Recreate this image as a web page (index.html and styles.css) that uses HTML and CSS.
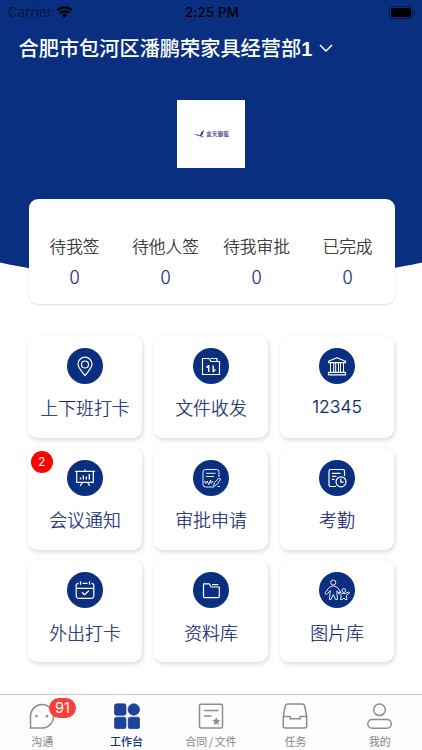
FILE: index.html
```
<!DOCTYPE html>
<html lang="zh-CN">

<head>
    <meta charset="UTF-8">
    <meta name="viewport" content="width=device-width, initial-scale=1.0">
    <title>工作台</title>
    <link rel="stylesheet" href="styles.css">
</head>

<body>
    <div class="wrapper">
        <div class="header">
            <div class="status">
                <div class="carrier">
                    <span>Carrier</span>
                    <svg class="wifi" viewBox="0 0 17 12">
                        <path d="M8.5 12L5.9 9.2a3.7 3.7 0 0 1 5.2 0z" fill="#000" />
                        <path d="M3.9 7.2a6.5 6.5 0 0 1 9.2 0M1.2 4.4a10.4 10.4 0 0 1 14.6 0" fill="none" stroke="#000" stroke-width="2.3" />
                    </svg>
                </div>
                <div class="time">2:25 PM</div>
                <svg class="battery" viewBox="0 0 27 13">
                    <rect x=".5" y=".5" width="23" height="12" rx="3.3" fill="none" stroke="#000" stroke-opacity=".4" />
                    <rect x="2" y="2" width="20" height="9" rx="1.8" fill="#000" />
                    <path d="M25 4.5v4q1.5-.6 1.5-2t-1.5-2z" fill="#000" fill-opacity=".4" />
                </svg>
            </div>
            <div class="company">
                <span>合肥市包河区潘鹏荣家具经营部<b>1</b></span>
                <svg class="arrow" viewBox="0 0 14 8"><path d="M1 1l6 6 6-6" /></svg>
            </div>
            <div class="logo">
                <svg class="logo-mark" viewBox="0 0 12 9">
                    <path d="M0 5l4.500.6L7 6.400l1.300-3L11 .5 10 4.500 8 7.500 5 6.800 3.500 5.900z" />
                    <path d="M8 8.200l2.500-1" stroke="#1c2f7c" stroke-width=".7" />
                </svg>
                <span>言天御玺</span>
            </div>
        </div>

        <div class="stats">
            <div class="stat"><div class="name">待我签</div><div class="num">0</div></div>
            <div class="stat"><div class="name">待他人签</div><div class="num">0</div></div>
            <div class="stat"><div class="name">待我审批</div><div class="num">0</div></div>
            <div class="stat"><div class="name">已完成</div><div class="num">0</div></div>
        </div>

        <ul class="menu">
            <li>
                <svg class="icon" viewBox="0 0 36 36">
                    <path d="M18 27.500c-4.500-5.300-7-8.200-7-11.300a7 7 0 0 1 14 0c0 3.100-2.500 6-7 11.300z" />
                    <circle cx="18" cy="16.500" r="3.500" />
                </svg>
                <div class="des">上下班打卡</div>
            </li>
            <li>
                <svg class="icon" viewBox="0 0 36 36">
                    <path d="M9.500 26.500v-16h6.500l2 3h8.500v13z" />
                    <path d="M17.500 10.500h6.500v3" />
                    <path d="M13.500 19.500l2.200-2v6.500M20.200 17.500v6.300l2.200-2.300" stroke-width="1.500" />
                </svg>
                <div class="des">文件收发</div>
            </li>
            <li>
                <svg class="icon" viewBox="0 0 36 36">
                    <path d="M9.500 14.700v-1.500L18 9.700l8.500 3.500v1.500zM9.500 26.800v-2.500h17v2.500z" />
                    <path d="M11.500 15v9M14.700 15v9M16.700 15v9M19.500 15v9M21.500 15v9M24.500 15v9" stroke-width="1" />
                </svg>
                <div class="des latin">12345</div>
            </li>
            <li>
                <span class="badge">2</span>
                <svg class="icon" viewBox="0 0 36 36">
                    <path d="M8 11.300h20M9.700 11.500v10.800h16.600V11.500M9.700 22.300h16.600M18 9.500v1.500M15.500 22.500l-2.300 3.300M20.500 22.500l2.300 3.300" />
                    <path d="M13.500 19.500v-2M16.300 19.500v-4M19.300 19.500v-3M22.300 19.500V14" stroke-width="1.400" />
                </svg>
                <div class="des">会议通知</div>
            </li>
            <li>
                <svg class="icon thin" viewBox="0 0 36 36">
                    <path d="M26 17v-5a2.500 2.500 0 0 0-2.500-2.500h-11A2.500 2.500 0 0 0 10 12v12.500a2.500 2.500 0 0 0 2.500 2.500H21M13 13.300h9.500M13 16.500h8" />
                    <path d="M11.500 21l1.200 2.500 1.600-2.500 1.300 3.500 2-4.500.5 3.500 2-2.500M20.500 26l1-3.500 4.500-4.300 1.700.8-3.200 5-3 2zM24.500 26.500h2.500" />
                </svg>
                <div class="des">审批申请</div>
            </li>
            <li>
                <svg class="icon" viewBox="0 0 36 36">
                    <path d="M25.500 16v-5a1.500 1.500 0 0 0-1.500-1.500H11.500A1.500 1.500 0 0 0 10 11v14a1.500 1.500 0 0 0 1.500 1.500H17M13 13.300h8.500M13 16.300h4.500M13 19.300h2.500" />
                    <circle cx="22" cy="21.800" r="5" />
                    <path d="M21.800 18.800v3.400h2.800" />
                </svg>
                <div class="des">考勤</div>
            </li>
            <li>
                <svg class="icon" viewBox="0 0 36 36">
                    <path d="M11.500 11.300a2.300 2.300 0 0 0-2.300 2.300V24a2.300 2.300 0 0 0 2.300 2.300h13A2.300 2.300 0 0 0 26.800 24V13.600a2.300 2.300 0 0 0-2.300-2.300M15.500 11.300h5M9.200 16.300h17.600M13.500 9.300v3.500M22.500 9.300v3.500" />
                    <path d="M15 20.300l2.500 2.400 4.300-3.900" />
                </svg>
                <div class="des">外出打卡</div>
            </li>
            <li>
                <svg class="icon" viewBox="0 0 36 36">
                    <path d="M10.500 11.800h5.800l1.800 3.200h8.200v9.500a1.200 1.200 0 0 1-1.200 1.200H12a1.500 1.500 0 0 1-1.500-1.500zM19 12.600h6.300" />
                </svg>
                <div class="des">资料库</div>
            </li>
            <li>
                <svg class="icon thin" viewBox="0 0 36 36">
                    <circle cx="14.300" cy="10.500" r="2.500" />
                    <path d="M10.500 27.500l.7-9-2.700 3.200c-1.500 1.200-3 .2-2.200-1l3.200-4.500q2-2.200 4.800-2.200t4.800 2.200l2.300 4-1.300 1-2.300-2.200.7 8.500h-2l-2.200-5-2.300 5z" />
                    <circle cx="24.800" cy="18.500" r="1.900" />
                    <path d="M20.500 20.300l2.800 1.200h3l3.500-1.500.7 1-3.200 2.300.7 4.200h-2l-1.200-1.700-1.300 1.700h-2l.7-4.200-2.500-1.800z" />
                </svg>
                <div class="des">图片库</div>
            </li>
        </ul>

        <div class="tabbar">
            <div class="tab">
                <svg viewBox="0 0 26 26">
                    <path d="M1.500 25V13A11.500 11.700 0 1 1 13 25z" />
                    <path d="M7.500 11.900v2.400M18 11.900v2.400" stroke-width="2.400" />
                </svg>
                <span class="count">91</span>
                <span>沟通</span>
            </div>
            <div class="tab active">
                <svg viewBox="0 0 26 26">
                    <rect x=".5" y=".8" width="11.500" height="11.500" rx="2" />
                    <circle cx="19.800" cy="6.500" r="5.800" />
                    <rect x=".5" y="14.200" width="11.500" height="11.500" rx="2" />
                    <rect x="14.200" y="14.200" width="11.500" height="11.500" rx="2" />
                </svg>
                <span>工作台</span>
            </div>
            <div class="tab">
                <svg viewBox="0 0 26 26">
                    <rect x="1.500" y="1.200" width="23" height="23.800" rx="1.500" />
                    <path d="M6 7.500h14.500M6 13h7.500" />
                    <path d="M18.300 14.200l1.200 2.600 2.800.3-2.100 2 .6 2.900-2.500-1.500-2.500 1.500.6-2.900-2.100-2 2.800-.3z" fill="#8d8d8d" stroke="none" />
                </svg>
                <span>合同<i>/</i>文件</span>
            </div>
            <div class="tab">
                <svg viewBox="0 0 26 26">
                    <path d="M1.300 13.500L3.300 3q.4-2 2.300-2h14.800q1.900 0 2.300 2l2 10.500V23q0 2-2 2H3.300q-2 0-2-2zM1.300 13.500h6.900v2.200h10v-2.200h6.500" />
                </svg>
                <span>任务</span>
            </div>
            <div class="tab">
                <svg viewBox="0 0 26 26">
                    <circle cx="12.500" cy="6.800" r="5.800" />
                    <rect x=".8" y="16.500" width="23.500" height="8.700" rx="4.350" />
                </svg>
                <span>我的</span>
            </div>
        </div>
    </div>
</body>

</html>
```

FILE: styles.css
```
* {
    padding: 0;
    margin: 0;
    box-sizing: border-box;
}

body {
    background: #fff;
    font-family: "Noto Sans CJK SC", sans-serif;
}

.wrapper {
    width: 422px;
    height: 750px;
    display: flex;
    flex-direction: column;
    overflow: hidden;
}

.header {
    height: 285px;
    flex-shrink: 0;
    background: #0a2f80;
    clip-path: circle(1000px at 50% -715px);
}

.status {
    height: 24px;
    padding: 0 6px 0 8px;
    display: grid;
    grid-template-columns: 1fr auto 1fr;
    align-items: center;
    font: 13.200px/24px Inter, sans-serif;
    letter-spacing: 0.1px;
    color: #000;
}

.carrier {
    display: flex;
    align-items: center;
    gap: 4px;
    color: #07163c;
}

.wifi {
    width: 17px;
    height: 12px;
}

.time {
    font-weight: 500;
    letter-spacing: 0.25px;
}

.battery {
    width: 27px;
    height: 13px;
    justify-self: end;
}

.company {
    height: 48px;
    padding: 0 0 1px 18.500px;
    display: flex;
    align-items: center;
    font-size: 20.200px;
    font-weight: 500;
    color: #fff;
}

.company b {
    font: 700 20px "Liberation Sans", sans-serif;
}

.arrow {
    width: 14px;
    height: 8px;
    margin-left: 7px;
    fill: none;
    stroke: #fff;
    stroke-width: 1.500;
}

.logo {
    width: 68px;
    height: 68px;
    margin: 28px auto 0;
    padding-bottom: 1px;
    display: flex;
    align-items: center;
    justify-content: center;
    gap: 1px;
    background: #fff;
    font-size: 5.800px;
    font-weight: 500;
    color: #1c2f7c;
}

.logo-mark {
    width: 12px;
    height: 9px;
    fill: #1c2f7c;
}

.stats {
    position: relative;
    width: 366px;
    height: 105px;
    flex-shrink: 0;
    margin: -86px 0 0 29px;
    padding: 33px 2px 0 0;
    display: grid;
    grid-template-columns: repeat(4, 1fr);
    border-radius: 9px;
    background: #fff;
    box-shadow: 0 1px 2px rgba(0, 0, 0, 0.15);
    text-align: center;
}

.stat .name {
    font-size: 16.700px;
    line-height: 28px;
    font-weight: 300;
    color: #222;
    -webkit-text-stroke: 0.200px #222;
}

.stat .num {
    font-size: 19px;
    line-height: 31px;
    font-weight: 300;
    color: #1b2d86;
    -webkit-text-stroke: 0.200px #1b2d86;
}

.menu {
    margin: 31.500px 28px 0 28px;
    display: grid;
    grid-template-columns: repeat(3, 114px);
    grid-auto-rows: 102px;
    gap: 10.400px 12px;
    list-style: none;
}

.menu li {
    position: relative;
    padding-top: 12px;
    display: flex;
    flex-direction: column;
    align-items: center;
    border-radius: 9px;
    background: #fff;
    box-shadow: 1px 2px 4px rgba(20, 40, 130, 0.18);
}

.icon {
    width: 36px;
    height: 36px;
    flex-shrink: 0;
    border-radius: 50%;
    background: #0a2f80;
    fill: none;
    stroke: #fff;
    stroke-width: 1.200;
    stroke-linejoin: round;
}

.icon.thin {
    stroke-width: 0.900;
}

.des {
    margin-top: 8.600px;
    font-size: 17.900px;
    line-height: 30px;
    font-weight: 300;
    color: #10256f;
    -webkit-text-stroke: 0.200px #10256f;
}

.des.latin {
    font-family: Inter, sans-serif;
    font-size: 17.500px;
}

.badge {
    position: absolute;
    left: 2.500px;
    top: 3px;
    width: 22.500px;
    height: 22.500px;
    border-radius: 50%;
    background: #fd0000;
    font: 11.500px/22.500px Inter, sans-serif;
    color: #fff;
    text-align: center;
}

.tabbar {
    height: 56px;
    flex-shrink: 0;
    margin-top: auto;
    padding-top: 8px;
    display: grid;
    grid-template-columns: repeat(5, 1fr);
    border-top: 1px solid #c8c8c8;
    background: #fdfdfd;
}

.tab {
    position: relative;
    display: flex;
    flex-direction: column;
    align-items: center;
    font-size: 11px;
    line-height: 16px;
    color: #858585;
}

.tab svg {
    width: 26px;
    height: 26px;
    margin-bottom: 4px;
    fill: none;
    stroke: #8d8d8d;
    stroke-width: 1.500;
}

.tab i {
    margin: 0 1.500px;
    font-style: normal;
}

.active {
    color: #17317f;
    font-weight: 500;
}

.tab.active svg {
    fill: #1f439b;
    stroke: #17317f;
    stroke-width: 0.600;
}

.count {
    position: absolute;
    left: 49px;
    top: -5px;
    width: 27px;
    height: 20px;
    border-radius: 10px;
    background: #fc3d39;
    font: 14.500px/20px Inter, sans-serif;
    color: #fff;
    text-align: center;
}
```
